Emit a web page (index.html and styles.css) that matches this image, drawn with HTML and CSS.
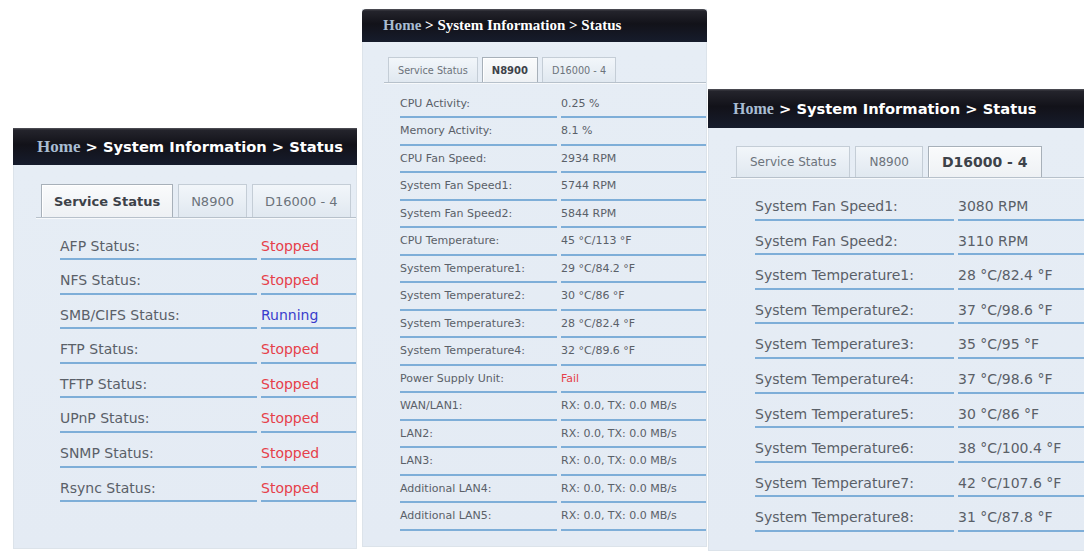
FILE: index.html
```html
<!DOCTYPE html>
<html>
<head>
    <meta charset="utf-8" />
    <title>status</title>
    <link rel="stylesheet" href="styles.css">
</head>
<body>
<div class="board">

    <!-- service status -->
    <div class="panel panel-a">
        <div class="crumb"><span class="home">Home</span>&nbsp;&gt; System Information &gt; Status</div>
        <div class="tabs">
            <span class="tab on">Service Status</span>
            <span class="tab">N8900</span>
            <span class="tab">D16000 - 4</span>
        </div>
        <div class="rows">
            <div class="row"><span>AFP Status:</span><span class="stop">Stopped</span></div>
            <div class="row"><span>NFS Status:</span><span class="stop">Stopped</span></div>
            <div class="row"><span>SMB/CIFS Status:</span><span class="run">Running</span></div>
            <div class="row"><span>FTP Status:</span><span class="stop">Stopped</span></div>
            <div class="row"><span>TFTP Status:</span><span class="stop">Stopped</span></div>
            <div class="row"><span>UPnP Status:</span><span class="stop">Stopped</span></div>
            <div class="row"><span>SNMP Status:</span><span class="stop">Stopped</span></div>
            <div class="row"><span>Rsync Status:</span><span class="stop">Stopped</span></div>
        </div>
    </div>

    <!-- N8900 -->
    <div class="panel panel-b">
        <div class="crumb"><span class="home">Home</span>&nbsp;&gt; System Information &gt; Status</div>
        <div class="tabs">
            <span class="tab">Service Status</span>
            <span class="tab on">N8900</span>
            <span class="tab">D16000 - 4</span>
        </div>
        <div class="rows">
            <div class="row"><span>CPU Activity:</span><span>0.25 %</span></div>
            <div class="row"><span>Memory Activity:</span><span>8.1 %</span></div>
            <div class="row"><span>CPU Fan Speed:</span><span>2934 RPM</span></div>
            <div class="row"><span>System Fan Speed1:</span><span>5744 RPM</span></div>
            <div class="row"><span>System Fan Speed2:</span><span>5844 RPM</span></div>
            <div class="row"><span>CPU Temperature:</span><span>45 °C/113 °F</span></div>
            <div class="row"><span>System Temperature1:</span><span>29 °C/84.2 °F</span></div>
            <div class="row"><span>System Temperature2:</span><span>30 °C/86 °F</span></div>
            <div class="row"><span>System Temperature3:</span><span>28 °C/82.4 °F</span></div>
            <div class="row"><span>System Temperature4:</span><span>32 °C/89.6 °F</span></div>
            <div class="row"><span>Power Supply Unit:</span><span class="stop">Fail</span></div>
            <div class="row"><span>WAN/LAN1:</span><span>RX: 0.0, TX: 0.0 MB/s</span></div>
            <div class="row"><span>LAN2:</span><span>RX: 0.0, TX: 0.0 MB/s</span></div>
            <div class="row"><span>LAN3:</span><span>RX: 0.0, TX: 0.0 MB/s</span></div>
            <div class="row"><span>Additional LAN4:</span><span>RX: 0.0, TX: 0.0 MB/s</span></div>
            <div class="row"><span>Additional LAN5:</span><span>RX: 0.0, TX: 0.0 MB/s</span></div>
        </div>
    </div>

    <!-- D16000 - 4 -->
    <div class="panel panel-c">
        <div class="crumb"><span class="home">Home</span>&nbsp;&gt; System Information &gt; Status</div>
        <div class="tabs">
            <span class="tab">Service Status</span>
            <span class="tab">N8900</span>
            <span class="tab on">D16000 - 4</span>
        </div>
        <div class="rows">
            <div class="row"><span>System Fan Speed1:</span><span>3080 RPM</span></div>
            <div class="row"><span>System Fan Speed2:</span><span>3110 RPM</span></div>
            <div class="row"><span>System Temperature1:</span><span>28 °C/82.4 °F</span></div>
            <div class="row"><span>System Temperature2:</span><span>37 °C/98.6 °F</span></div>
            <div class="row"><span>System Temperature3:</span><span>35 °C/95 °F</span></div>
            <div class="row"><span>System Temperature4:</span><span>37 °C/98.6 °F</span></div>
            <div class="row"><span>System Temperature5:</span><span>30 °C/86 °F</span></div>
            <div class="row"><span>System Temperature6:</span><span>38 °C/100.4 °F</span></div>
            <div class="row"><span>System Temperature7:</span><span>42 °C/107.6 °F</span></div>
            <div class="row"><span>System Temperature8:</span><span>31 °C/87.8 °F</span></div>
        </div>
    </div>

</div>
</body>
</html>
```

FILE: styles.css
```css
body {
    margin: 0;
    background: #fff;
    font-family: "DejaVu Sans", sans-serif;
    overflow: hidden;
}

.board {
    display: flex;
    align-items: flex-start;
    padding-left: 13px;
}

.panel {
    flex: none;
    box-sizing: border-box;
    background: linear-gradient(#f3f6f9, #e6edf5 40px, #e4ebf4);
    border: 1px solid #dce3ea;
    border-top: 0;
}

.panel-a {
    width: 344px;
    height: 421px;
    margin-top: 128px;
}

.panel-b {
    width: 345px;
    height: 538px;
    margin-top: 9px;
    margin-left: 5px;
}

.panel-c {
    width: 378px;
    height: 462px;
    margin-top: 89px;
    margin-left: 1px;
}

/* breadcrumb bar */
.crumb {
    display: flex;
    align-items: center;
    margin: 0 -1px;
    padding-left: 24px;
    height: 37px;
    background: linear-gradient(#55555c 0, #24242c 2px, #121219 45%, #161c2c 100%);
    color: #fff;
    font-weight: bold;
    font-size: 14.7px;
    white-space: nowrap;
}

.crumb .home {
    font-family: "Liberation Serif", serif;
    font-size: 17px;
    color: #a9bdd2;
}

.panel-b .crumb {
    height: 33px;
    padding-left: 21px;
    border-radius: 4px 4px 0 0;
    font-family: "Liberation Serif", serif;
    font-size: 15px;
}

.panel-b .crumb .home {
    font-size: 15px;
}

.panel-c .crumb {
    height: 39px;
    padding-left: 25px;
}

.panel-c .crumb .home {
    font-size: 16px;
}

/* tab strip */
.tabs {
    display: flex;
    align-items: flex-end;
    gap: 5px;
    margin: 19px 0 0 22px;
    padding-left: 5px;
    border-bottom: 1px solid #b7c1cb;
    box-shadow: 0 1px 0 #f7f9fb;
}

.tab {
    display: flex;
    align-items: center;
    box-sizing: border-box;
    height: 33px;
    padding: 0 12px;
    border: 1px solid #c4cdd6;
    border-bottom: 0;
    background: linear-gradient(#f2f6fa, #e0e8f0);
    color: #6c737b;
    font-size: 13px;
}

.tab.on {
    background: linear-gradient(#fafbfc, #eef1f4);
    border-color: #a7b0b9;
    box-shadow: inset 1px 1px 0 #fff;
    color: #3d4249;
    font-weight: bold;
}

.panel-b .tabs {
    margin: 15px 0 0 21px;
    padding-left: 4px;
    gap: 4px;
}

.panel-b .tab {
    height: 25px;
    padding: 0 9px;
    font-size: 9.7px;
}

.panel-b .tab.on {
    font-size: 10px;
}

.panel-c .tabs {
    margin-top: 18px;
    gap: 5px;
}

.panel-c .tab {
    height: 31px;
    padding: 0 13px;
    font-size: 12px;
}

.panel-c .tab.on {
    font-size: 14px;
}

/* value rows */
.rows {
    margin-left: 46px;
    padding-top: 7.5px;
}

.row {
    display: grid;
    grid-template-columns: 197px 1fr;
    column-gap: 4px;
}

.row span {
    display: block;
    height: 22.6px;
    padding-top: 10px;
    line-height: 20px;
    border-bottom: 2px solid #7eaed8;
    color: #5a6068;
    font-size: 14px;
    white-space: nowrap;
}

.panel-b .rows {
    margin-left: 37px;
    padding-top: 7.5px;
}

.panel-b .row {
    grid-template-columns: 157px 1fr;
}

.panel-b .row span {
    height: 19.5px;
    padding-top: 6px;
    line-height: 14px;
    font-size: 11px;
}

.panel-c .rows {
    padding-top: 8px;
}

.panel-c .row {
    grid-template-columns: 199px 1fr;
}

.row .stop {
    color: #e6404a;
}

.row .run {
    color: #3a3ccc;
}
```
